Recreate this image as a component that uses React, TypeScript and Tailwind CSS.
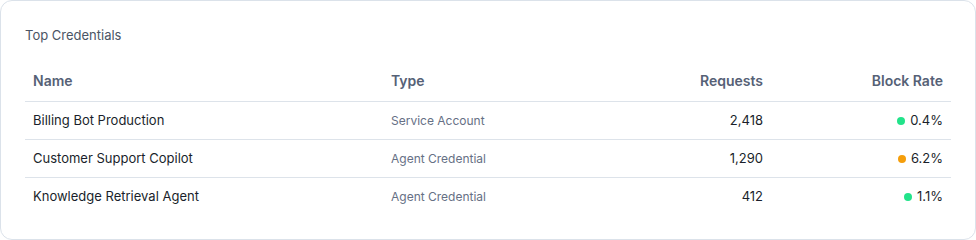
const rows = [
  { name: "Billing Bot Production", type: "Service Account", requests: "2,418", rate: "0.4%", dot: "bg-[#22e38a]" },
  { name: "Customer Support Copilot", type: "Agent Credential", requests: "1,290", rate: "6.2%", dot: "bg-[#f59e0b]" },
  { name: "Knowledge Retrieval Agent", type: "Agent Credential", requests: "412", rate: "1.1%", dot: "bg-[#22e38a]" },
];

export default function App() {
  return (
    <div className="h-[240px] w-[976px] bg-white font-['Inter',sans-serif]">
      <div className="h-[240px] rounded-xl border border-[#dbe2ea] bg-white px-[24px] pt-[26px]">
        <h2 className="text-[13px] leading-[16px] text-[#4b5565]">Top Credentials</h2>
        <div className="mt-[17px]">
          <div className="grid h-[42px] grid-cols-[358px_208px_180px_180px] items-center border-b border-[#dde3ea] text-[14px] font-semibold text-[#566176]">
            <div className="pl-[8px]">Name</div>
            <div className="pl-[8px]">Type</div>
            <div className="pr-[8px] text-right">Requests</div>
            <div className="pr-[8px] text-right">Block Rate</div>
          </div>
          {rows.map((r, i) => (
            <div
              key={r.name}
              className={
                "grid h-[38px] grid-cols-[358px_208px_180px_180px] items-center text-[13px] text-[#1a1f2b] " +
                (i < rows.length - 1 ? "border-b border-[#dde3ea]" : "")
              }
            >
              <div className="pl-[8px]">{r.name}</div>
              <div className="pl-[8px] text-[12px] text-[#667085]">{r.type}</div>
              <div className="pr-[8px] text-right">{r.requests}</div>
              <div className="flex items-center justify-end gap-[5px] pr-[8px]">
                <span className={"h-[8px] w-[8px] rounded-full " + r.dot} />
                <span>{r.rate}</span>
              </div>
            </div>
          ))}
        </div>
      </div>
    </div>
  );
}
